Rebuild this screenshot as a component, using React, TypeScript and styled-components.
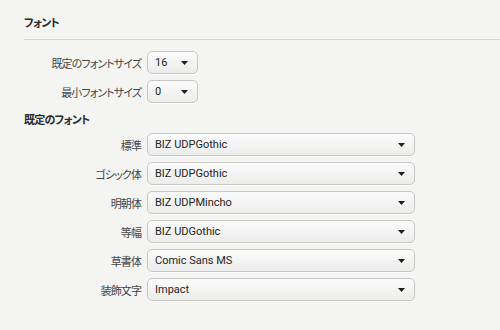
import React from 'react';
import styled, { createGlobalStyle } from 'styled-components';

const GlobalStyle = createGlobalStyle`
  html, body {
    margin: 0;
    padding: 0;
    background: #f4f4f3;
  }
  body {
    font-family: "Noto Sans CJK JP", "Noto Sans", sans-serif;
    font-size: 11px;
    color: #333;
  }
`;

const Page = styled.div`
  width: 500px;
  height: 330px;
  padding-left: 24px;
  box-sizing: border-box;
  overflow: hidden;
`;

const Header = styled.div`
  padding: 14px 0 9px;
  line-height: 16px;
  border-bottom: 1px solid #d6d6d5;
`;

const SectionTitle = styled.div`
  font-weight: 700;
  font-size: 11px;
  line-height: 16px;
  letter-spacing: -0.8px;
  color: #2b2b2b;
  font-feature-settings: "palt";
`;

const SubTitle = styled(SectionTitle)`
  margin-top: 8px;
`;

const FormGrid = styled.div<{ $top: number }>`
  display: grid;
  grid-template-columns: 117px auto;
  column-gap: 6px;
  row-gap: 6px;
  margin-top: ${({ $top }) => $top}px;
  justify-content: start;
`;

const Label = styled.div`
  text-align: right;
  align-self: center;
  color: #454545;
  font-size: 11px;
  line-height: 16px;
  letter-spacing: -0.9px;
  white-space: nowrap;
  font-feature-settings: "palt";
`;

const SelectBox = styled.div<{ $width: number }>`
  width: ${({ $width }) => $width}px;
  height: 23px;
  box-sizing: border-box;
  display: flex;
  align-items: center;
  justify-content: space-between;
  padding: 0 9px 0 7px;
  border: 1px solid #c6c6c5;
  border-radius: 5px;
  background: linear-gradient(#fbfbfb, #ececeb);
  box-shadow: 0 1px 0 rgba(255, 255, 255, 0.8);
  font-family: Roboto, "Noto Sans", sans-serif;
  font-size: 11px;
  color: #242424;
`;

const Value = styled.span`
  line-height: 16px;
  white-space: nowrap;
`;

const Arrow = () => (
  <svg width="7" height="4" viewBox="0 0 7 4">
    <path d="M0 0 H7 L3.5 4 Z" fill="#1e1e1e" />
  </svg>
);

const Select: React.FC<{ value: string; width: number }> = ({ value, width }) => (
  <SelectBox $width={width}>
    <Value>{value}</Value>
    <Arrow />
  </SelectBox>
);

const sizes = [
  { label: '既定のフォントサイズ', value: '16' },
  { label: '最小フォントサイズ', value: '0' },
];

const fonts = [
  { label: '標準', value: 'BIZ UDPGothic' },
  { label: 'ゴシック体', value: 'BIZ UDPGothic' },
  { label: '明朝体', value: 'BIZ UDPMincho' },
  { label: '等幅', value: 'BIZ UDGothic' },
  { label: '草書体', value: 'Comic Sans MS' },
  { label: '装飾文字', value: 'Impact' },
];

export default function App() {
  return (
    <>
      <GlobalStyle />
      <Page>
        <Header>
          <SectionTitle>フォント</SectionTitle>
        </Header>
        <FormGrid $top={11}>
          {sizes.map((s) => (
            <React.Fragment key={s.label}>
              <Label>{s.label}</Label>
              <Select value={s.value} width={51} />
            </React.Fragment>
          ))}
        </FormGrid>
        <SubTitle>既定のフォント</SubTitle>
        <FormGrid $top={6}>
          {fonts.map((f) => (
            <React.Fragment key={f.label}>
              <Label>{f.label}</Label>
              <Select value={f.value} width={268} />
            </React.Fragment>
          ))}
        </FormGrid>
      </Page>
    </>
  );
}
